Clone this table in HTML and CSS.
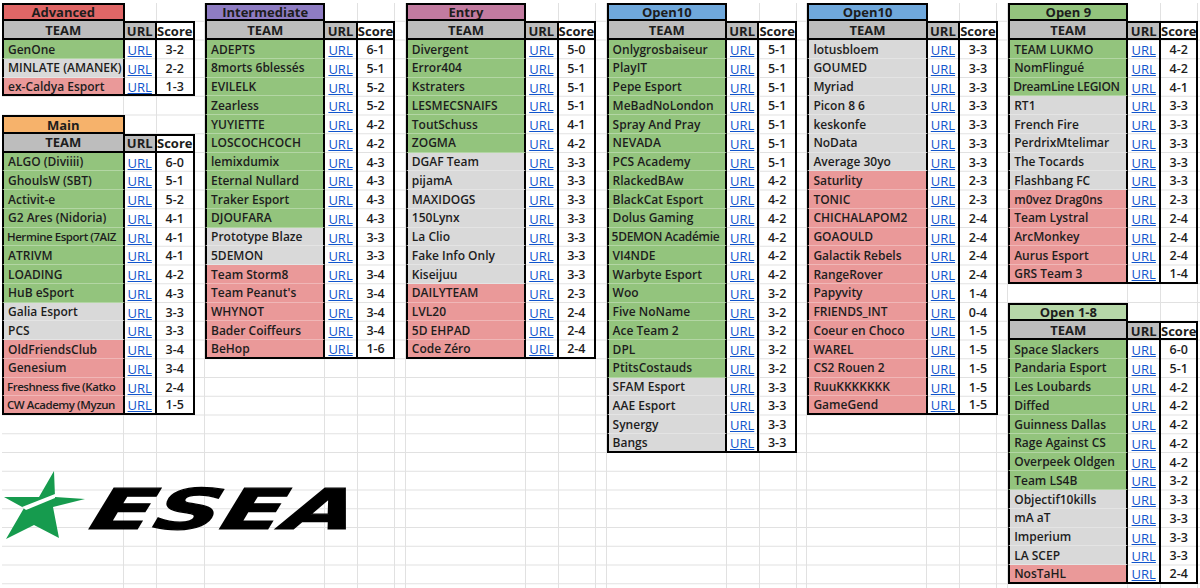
FILE: index.html
```html
<!DOCTYPE html>
<html lang="fr">
<head>
<meta charset="utf-8">
<title>ESEA</title>
<link rel="stylesheet" href="styles.css">
</head>
<body>
<div class="sheet">

  <div class="col first">
    <div class="tbl">
      <div class="title c-adv">Advanced</div><i class="blank"></i>
      <div class="hd team">TEAM</div><div class="hd url">URL</div><div class="hd score">Score</div>
      <div class="r g"><span class="t">GenOne</span><a class="u">URL</a><span class="s">3-2</span></div>
      <div class="r n"><span class="t">MINLATE (AMANEK)</span><a class="u">URL</a><span class="s">2-2</span></div>
      <div class="r x"><span class="t">ex-Caldya Esport</span><a class="u">URL</a><span class="s">1-3</span></div>
    </div>
    <div class="tbl next">
      <div class="title c-main">Main</div><i class="blank"></i>
      <div class="hd team">TEAM</div><div class="hd url">URL</div><div class="hd score">Score</div>
      <div class="r g"><span class="t">ALGO (Diviiii)</span><a class="u">URL</a><span class="s">6-0</span></div>
      <div class="r g"><span class="t">GhoulsW (SBT)</span><a class="u">URL</a><span class="s">5-1</span></div>
      <div class="r g"><span class="t">Activit-e</span><a class="u">URL</a><span class="s">5-2</span></div>
      <div class="r g"><span class="t">G2 Ares (Nidoria)</span><a class="u">URL</a><span class="s">4-1</span></div>
      <div class="r g"><span class="t fit">Hermine Esport (7AIZ</span><a class="u">URL</a><span class="s">4-1</span></div>
      <div class="r g"><span class="t">ATRIVM</span><a class="u">URL</a><span class="s">4-1</span></div>
      <div class="r g"><span class="t">LOADING</span><a class="u">URL</a><span class="s">4-2</span></div>
      <div class="r g"><span class="t">HuB eSport</span><a class="u">URL</a><span class="s">4-3</span></div>
      <div class="r n"><span class="t">Galia Esport</span><a class="u">URL</a><span class="s">3-3</span></div>
      <div class="r n"><span class="t">PCS</span><a class="u">URL</a><span class="s">3-3</span></div>
      <div class="r x"><span class="t">OldFriendsClub</span><a class="u">URL</a><span class="s">3-4</span></div>
      <div class="r x"><span class="t">Genesium</span><a class="u">URL</a><span class="s">3-4</span></div>
      <div class="r x"><span class="t fit">Freshness five (Katko</span><a class="u">URL</a><span class="s">2-4</span></div>
      <div class="r x"><span class="t fit">CW Academy (Myzun</span><a class="u">URL</a><span class="s">1-5</span></div>
    </div>
  </div>

  <div class="col">
    <div class="tbl">
      <div class="title c-int">Intermediate</div><i class="blank"></i>
      <div class="hd team">TEAM</div><div class="hd url">URL</div><div class="hd score">Score</div>
      <div class="r g"><span class="t">ADEPTS</span><a class="u">URL</a><span class="s">6-1</span></div>
      <div class="r g"><span class="t">8morts 6blessés</span><a class="u">URL</a><span class="s">5-1</span></div>
      <div class="r g"><span class="t">EVILELK</span><a class="u">URL</a><span class="s">5-2</span></div>
      <div class="r g"><span class="t">Zearless</span><a class="u">URL</a><span class="s">5-2</span></div>
      <div class="r g"><span class="t">YUYIETTE</span><a class="u">URL</a><span class="s">4-2</span></div>
      <div class="r g"><span class="t">LOSCOCHCOCH</span><a class="u">URL</a><span class="s">4-2</span></div>
      <div class="r g"><span class="t">lemixdumix</span><a class="u">URL</a><span class="s">4-3</span></div>
      <div class="r g"><span class="t">Eternal Nullard</span><a class="u">URL</a><span class="s">4-3</span></div>
      <div class="r g"><span class="t">Traker Esport</span><a class="u">URL</a><span class="s">4-3</span></div>
      <div class="r g"><span class="t">DJOUFARA</span><a class="u">URL</a><span class="s">4-3</span></div>
      <div class="r n"><span class="t">Prototype Blaze</span><a class="u">URL</a><span class="s">3-3</span></div>
      <div class="r n"><span class="t">5DEMON</span><a class="u">URL</a><span class="s">3-3</span></div>
      <div class="r x"><span class="t">Team Storm8</span><a class="u">URL</a><span class="s">3-4</span></div>
      <div class="r x"><span class="t">Team Peanut's</span><a class="u">URL</a><span class="s">3-4</span></div>
      <div class="r x"><span class="t">WHYNOT</span><a class="u">URL</a><span class="s">3-4</span></div>
      <div class="r x"><span class="t">Bader Coiffeurs</span><a class="u">URL</a><span class="s">3-4</span></div>
      <div class="r x"><span class="t">BeHop</span><a class="u">URL</a><span class="s">1-6</span></div>
    </div>
  </div>

  <div class="col">
    <div class="tbl">
      <div class="title c-entry">Entry</div><i class="blank"></i>
      <div class="hd team">TEAM</div><div class="hd url">URL</div><div class="hd score">Score</div>
      <div class="r g"><span class="t">Divergent</span><a class="u">URL</a><span class="s">5-0</span></div>
      <div class="r g"><span class="t">Error404</span><a class="u">URL</a><span class="s">5-1</span></div>
      <div class="r g"><span class="t">Kstraters</span><a class="u">URL</a><span class="s">5-1</span></div>
      <div class="r g"><span class="t">LESMECSNAIFS</span><a class="u">URL</a><span class="s">5-1</span></div>
      <div class="r g"><span class="t">ToutSchuss</span><a class="u">URL</a><span class="s">4-1</span></div>
      <div class="r g"><span class="t">ZOGMA</span><a class="u">URL</a><span class="s">4-2</span></div>
      <div class="r n"><span class="t">DGAF Team</span><a class="u">URL</a><span class="s">3-3</span></div>
      <div class="r n"><span class="t">pijamA</span><a class="u">URL</a><span class="s">3-3</span></div>
      <div class="r n"><span class="t">MAXIDOGS</span><a class="u">URL</a><span class="s">3-3</span></div>
      <div class="r n"><span class="t">150Lynx</span><a class="u">URL</a><span class="s">3-3</span></div>
      <div class="r n"><span class="t">La Clio</span><a class="u">URL</a><span class="s">3-3</span></div>
      <div class="r n"><span class="t">Fake Info Only</span><a class="u">URL</a><span class="s">3-3</span></div>
      <div class="r n"><span class="t">Kiseijuu</span><a class="u">URL</a><span class="s">3-3</span></div>
      <div class="r x"><span class="t">DAILYTEAM</span><a class="u">URL</a><span class="s">2-3</span></div>
      <div class="r x"><span class="t">LVL20</span><a class="u">URL</a><span class="s">2-4</span></div>
      <div class="r x"><span class="t">5D EHPAD</span><a class="u">URL</a><span class="s">2-4</span></div>
      <div class="r x"><span class="t">Code Zéro</span><a class="u">URL</a><span class="s">2-4</span></div>
    </div>
  </div>

  <div class="col">
    <div class="tbl">
      <div class="title c-open10">Open10</div><i class="blank"></i>
      <div class="hd team">TEAM</div><div class="hd url">URL</div><div class="hd score">Score</div>
      <div class="r g"><span class="t">Onlygrosbaiseur</span><a class="u">URL</a><span class="s">5-1</span></div>
      <div class="r g"><span class="t">PlayIT</span><a class="u">URL</a><span class="s">5-1</span></div>
      <div class="r g"><span class="t">Pepe Esport</span><a class="u">URL</a><span class="s">5-1</span></div>
      <div class="r g"><span class="t">MeBadNoLondon</span><a class="u">URL</a><span class="s">5-1</span></div>
      <div class="r g"><span class="t">Spray And Pray</span><a class="u">URL</a><span class="s">5-1</span></div>
      <div class="r g"><span class="t">NEVADA</span><a class="u">URL</a><span class="s">5-1</span></div>
      <div class="r g"><span class="t">PCS Academy</span><a class="u">URL</a><span class="s">5-1</span></div>
      <div class="r g"><span class="t">RlackedBAw</span><a class="u">URL</a><span class="s">4-2</span></div>
      <div class="r g"><span class="t">BlackCat Esport</span><a class="u">URL</a><span class="s">4-2</span></div>
      <div class="r g"><span class="t">Dolus Gaming</span><a class="u">URL</a><span class="s">4-2</span></div>
      <div class="r g"><span class="t snug">5DEMON Académie</span><a class="u">URL</a><span class="s">4-2</span></div>
      <div class="r g"><span class="t">VI4NDE</span><a class="u">URL</a><span class="s">4-2</span></div>
      <div class="r g"><span class="t">Warbyte Esport</span><a class="u">URL</a><span class="s">4-2</span></div>
      <div class="r g"><span class="t">Woo</span><a class="u">URL</a><span class="s">3-2</span></div>
      <div class="r g"><span class="t">Five NoName</span><a class="u">URL</a><span class="s">3-2</span></div>
      <div class="r g"><span class="t">Ace Team 2</span><a class="u">URL</a><span class="s">3-2</span></div>
      <div class="r g"><span class="t">DPL</span><a class="u">URL</a><span class="s">3-2</span></div>
      <div class="r g"><span class="t">PtitsCostauds</span><a class="u">URL</a><span class="s">3-2</span></div>
      <div class="r n"><span class="t">SFAM Esport</span><a class="u">URL</a><span class="s">3-3</span></div>
      <div class="r n"><span class="t">AAE Esport</span><a class="u">URL</a><span class="s">3-3</span></div>
      <div class="r n"><span class="t">Synergy</span><a class="u">URL</a><span class="s">3-3</span></div>
      <div class="r n"><span class="t">Bangs</span><a class="u">URL</a><span class="s">3-3</span></div>
    </div>
  </div>

  <div class="col">
    <div class="tbl">
      <div class="title c-open10">Open10</div><i class="blank"></i>
      <div class="hd team">TEAM</div><div class="hd url">URL</div><div class="hd score">Score</div>
      <div class="r n"><span class="t">lotusbloem</span><a class="u">URL</a><span class="s">3-3</span></div>
      <div class="r n"><span class="t">GOUMED</span><a class="u">URL</a><span class="s">3-3</span></div>
      <div class="r n"><span class="t">Myriad</span><a class="u">URL</a><span class="s">3-3</span></div>
      <div class="r n"><span class="t">Picon 8 6</span><a class="u">URL</a><span class="s">3-3</span></div>
      <div class="r n"><span class="t">keskonfe</span><a class="u">URL</a><span class="s">3-3</span></div>
      <div class="r n"><span class="t">NoData</span><a class="u">URL</a><span class="s">3-3</span></div>
      <div class="r n"><span class="t">Average 30yo</span><a class="u">URL</a><span class="s">3-3</span></div>
      <div class="r x"><span class="t">Saturlity</span><a class="u">URL</a><span class="s">2-3</span></div>
      <div class="r x"><span class="t">TONIC</span><a class="u">URL</a><span class="s">2-3</span></div>
      <div class="r x"><span class="t">CHICHALAPOM2</span><a class="u">URL</a><span class="s">2-4</span></div>
      <div class="r x"><span class="t">GOAOULD</span><a class="u">URL</a><span class="s">2-4</span></div>
      <div class="r x"><span class="t">Galactik Rebels</span><a class="u">URL</a><span class="s">2-4</span></div>
      <div class="r x"><span class="t">RangeRover</span><a class="u">URL</a><span class="s">2-4</span></div>
      <div class="r x"><span class="t">Papyvity</span><a class="u">URL</a><span class="s">1-4</span></div>
      <div class="r x"><span class="t">FRIENDS_INT</span><a class="u">URL</a><span class="s">0-4</span></div>
      <div class="r x"><span class="t">Coeur en Choco</span><a class="u">URL</a><span class="s">1-5</span></div>
      <div class="r x"><span class="t">WAREL</span><a class="u">URL</a><span class="s">1-5</span></div>
      <div class="r x"><span class="t">CS2 Rouen 2</span><a class="u">URL</a><span class="s">1-5</span></div>
      <div class="r x"><span class="t">RuuKKKKKKK</span><a class="u">URL</a><span class="s">1-5</span></div>
      <div class="r x"><span class="t">GameGend</span><a class="u">URL</a><span class="s">1-5</span></div>
    </div>
  </div>

  <div class="col">
    <div class="tbl">
      <div class="title c-open9">Open 9</div><i class="blank"></i>
      <div class="hd team">TEAM</div><div class="hd url">URL</div><div class="hd score">Score</div>
      <div class="r g"><span class="t">TEAM LUKMO</span><a class="u">URL</a><span class="s">4-2</span></div>
      <div class="r g"><span class="t">NomFlingué</span><a class="u">URL</a><span class="s">4-2</span></div>
      <div class="r g"><span class="t snug">DreamLine LEGION</span><a class="u">URL</a><span class="s">4-1</span></div>
      <div class="r n"><span class="t">RT1</span><a class="u">URL</a><span class="s">3-3</span></div>
      <div class="r n"><span class="t">French Fire</span><a class="u">URL</a><span class="s">3-3</span></div>
      <div class="r n"><span class="t">PerdrixMtelimar</span><a class="u">URL</a><span class="s">3-3</span></div>
      <div class="r n"><span class="t">The Tocards</span><a class="u">URL</a><span class="s">3-3</span></div>
      <div class="r n"><span class="t">Flashbang FC</span><a class="u">URL</a><span class="s">3-3</span></div>
      <div class="r x"><span class="t">m0vez Drag0ns</span><a class="u">URL</a><span class="s">2-3</span></div>
      <div class="r x"><span class="t">Team Lystral</span><a class="u">URL</a><span class="s">2-4</span></div>
      <div class="r x"><span class="t">ArcMonkey</span><a class="u">URL</a><span class="s">2-4</span></div>
      <div class="r x"><span class="t">Aurus Esport</span><a class="u">URL</a><span class="s">2-4</span></div>
      <div class="r x"><span class="t">GRS Team 3</span><a class="u">URL</a><span class="s">1-4</span></div>
    </div>
    <div class="tbl next">
      <div class="title c-open18">Open 1-8</div><i class="blank"></i>
      <div class="hd team">TEAM</div><div class="hd url">URL</div><div class="hd score">Score</div>
      <div class="r g"><span class="t">Space Slackers</span><a class="u">URL</a><span class="s">6-0</span></div>
      <div class="r g"><span class="t">Pandaria Esport</span><a class="u">URL</a><span class="s">5-1</span></div>
      <div class="r g"><span class="t">Les Loubards</span><a class="u">URL</a><span class="s">4-2</span></div>
      <div class="r g"><span class="t">Diffed</span><a class="u">URL</a><span class="s">4-2</span></div>
      <div class="r g"><span class="t">Guinness Dallas</span><a class="u">URL</a><span class="s">4-2</span></div>
      <div class="r g"><span class="t">Rage Against CS</span><a class="u">URL</a><span class="s">4-2</span></div>
      <div class="r g"><span class="t">Overpeek Oldgen</span><a class="u">URL</a><span class="s">4-2</span></div>
      <div class="r g"><span class="t">Team LS4B</span><a class="u">URL</a><span class="s">3-2</span></div>
      <div class="r n"><span class="t">Objectif10kills</span><a class="u">URL</a><span class="s">3-3</span></div>
      <div class="r n"><span class="t">mA aT</span><a class="u">URL</a><span class="s">3-3</span></div>
      <div class="r n"><span class="t">Imperium</span><a class="u">URL</a><span class="s">3-3</span></div>
      <div class="r n"><span class="t">LA SCEP</span><a class="u">URL</a><span class="s">3-3</span></div>
      <div class="r x"><span class="t">NosTaHL</span><a class="u">URL</a><span class="s">2-4</span></div>
    </div>
  </div>

  <div class="logo">
    <svg class="star" viewBox="0 0 85 72" width="85" height="72" aria-hidden="true">
      <polygon fill="#169b4e" points="52,1 53,27 83,29 51,37 57,68 32,55 4,69 22,38 2,27 37,27"/>
      <polygon fill="#fff" points="20,37 53,24 53,28 24,40"/>
    </svg>
    <span class="wordmark">ESEA</span>
  </div>
</div>
</body>
</html>
```

FILE: styles.css
```css
html, body {
  margin: 0;
  padding: 0;
  background: #fff;
}

body {
  width: 1200px;
  height: 588px;
  overflow: hidden;
  font-family: "Open Sans", "Noto Sans", sans-serif;
  color: #1d1d1d;
}

.sheet {
  position: relative;
  display: flex;
  height: 588px;
  box-sizing: border-box;
  padding: 2.7px 0 0 2px;
  overflow: hidden;
  --gl: #e1e1e1;
  --rh: 18.75px;
}

.col {
  --tw: 120.3px;
  flex: none;
  width: calc(var(--tw) + 80.5px);
  height: 100%;
  background-image:
    linear-gradient(to right,
      transparent calc(var(--tw) - 1px),
      var(--gl) calc(var(--tw) - 1px) var(--tw),
      transparent var(--tw) calc(var(--tw) + 31.5px),
      var(--gl) calc(var(--tw) + 31.5px) calc(var(--tw) + 32.5px),
      transparent calc(var(--tw) + 32.5px) calc(var(--tw) + 69px),
      var(--gl) calc(var(--tw) + 69px) calc(var(--tw) + 70px),
      transparent calc(var(--tw) + 70px) calc(100% - 1px),
      var(--gl) calc(100% - 1px)),
    linear-gradient(to bottom, transparent 17.75px, var(--gl) 17.75px);
  background-size: 100% 100%, 100% var(--rh);
  background-repeat: no-repeat, repeat;
}

.col.first {
  --tw: 122.5px;
}

.tbl {
  display: grid;
  grid-template-columns: var(--tw) 32.5px 37.5px;
  grid-auto-rows: var(--rh);
  width: calc(var(--tw) + 70px);
}

.tbl.next {
  margin-top: var(--rh);
}

.r {
  display: contents;
}

.title,
.hd,
.t,
.u,
.s {
  box-sizing: border-box;
  display: flex;
  align-items: center;
  min-width: 0;
  white-space: nowrap;
  overflow: hidden;
}

.title {
  grid-column: 1;
  justify-content: center;
  border: 2px solid #000;
  font-size: 13px;
  font-weight: 700;
}

.blank {
  grid-column: 2 / 4;
}

.hd {
  justify-content: center;
  font-size: 13px;
  font-weight: 700;
  border-bottom: 2px solid #000;
  border-right: 2px solid #000;
}

.hd.team {
  border-left: 2px solid #000;
  background: #bdbdbd;
}

.hd.url {
  border-top: 2px solid #000;
  background: #bdbdbd;
}

.hd.score {
  border-top: 2px solid #000;
  background: #fff;
}

.t {
  padding-left: 4px;
  border-left: 2px solid #000;
  border-right: 2px solid #000;
  border-bottom: 1px solid rgba(255, 255, 255, 0.3);
  font-size: 12px;
  font-weight: 600;
}

.t.snug {
  padding-left: 3px;
  letter-spacing: -0.3px;
}

.t.fit {
  padding-left: 3px;
  font-size: 11.5px;
  letter-spacing: -0.45px;
}

.u {
  justify-content: center;
  border-right: 2px solid #000;
  color: #1155cc;
  text-decoration: underline;
  font-size: 13px;
  font-weight: 500;
  padding-top: 1px;
}

.s {
  justify-content: center;
  border-right: 2px solid #000;
  font-size: 12.5px;
  font-weight: 600;
}

.r:last-child > * {
  border-bottom: 2px solid #000;
}

.g .t { background: #93c47d; }
.n .t { background: #d9d9d9; }
.x .t { background: #ea9999; }

.c-adv { background: #e06666; }
.c-main { background: #f6b26b; }
.c-int { background: #8e7cc3; }
.c-entry { background: #c27ba0; }
.c-open10 { background: #6fa8dc; }
.c-open9 { background: #93c47d; }
.c-open18 { background: #b6d7a8; }

.logo {
  position: absolute;
  left: 2px;
  top: 470px;
  width: 350px;
  height: 72px;
}

.star {
  position: absolute;
  left: 0;
  top: 0;
}

.wordmark {
  position: absolute;
  left: 99px;
  top: 12px;
  font-family: "DejaVu Sans", sans-serif;
  font-weight: 700;
  font-style: italic;
  font-size: 56px;
  line-height: 56px;
  color: #000;
  -webkit-text-stroke: 1.2px #000;
  transform: scaleX(1.64) skewX(-10deg);
  transform-origin: left top;
  letter-spacing: 0.5px;
}
```
